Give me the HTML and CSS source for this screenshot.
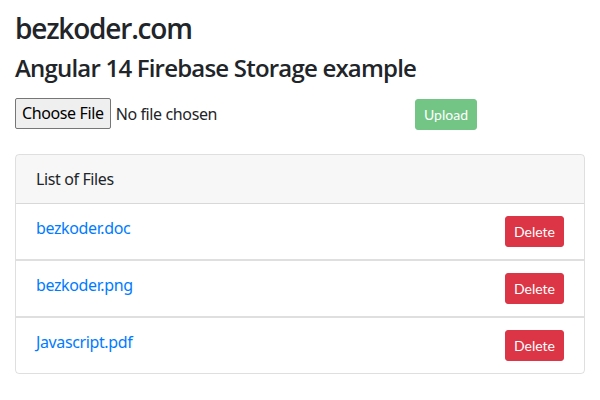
FILE: index.html
```html
<!DOCTYPE html>
<html>
<head>
<meta charset="utf-8">
<link rel="stylesheet" href="styles.css">
</head>
<body>
<div class="container">
  <h3 class="title">bezkoder.com</h3>
  <h4 class="subtitle">Angular 14 Firebase Storage example</h4>
  <div class="row">
    <div class="col-8">
      <label class="file-input">
        <span class="file-btn">Choose File</span>
        <span class="file-name">No file chosen</span>
      </label>
    </div>
    <div class="col-4">
      <button class="btn btn-success" disabled>Upload</button>
    </div>
  </div>
  <div class="card">
    <div class="card-header">List of Files</div>
    <ul class="list-group">
      <li class="list-group-item"><a href="#">bezkoder.doc</a><button class="btn btn-danger">Delete</button></li>
      <li class="list-group-item"><a href="#">bezkoder.png</a><button class="btn btn-danger">Delete</button></li>
      <li class="list-group-item"><a href="#">Javascript.pdf</a><button class="btn btn-danger">Delete</button></li>
    </ul>
  </div>
</div>
</body>
</html>
```
FILE: styles.css
```css
* { box-sizing: border-box; }
body {
  margin: 0;
  font-family: "Noto Sans", "Open Sans", sans-serif;
  font-size: 16px;
  line-height: 1.5;
  color: #212529;
  background: #fff;
  letter-spacing: -0.38px;
}
.container {
  width: 570px;
  margin: 0 15px;
  padding-top: 12px;
}
.title {
  margin: 0 0 8px;
  font-family: "Open Sans", "Noto Sans", sans-serif;
  font-size: 28px;
  font-weight: 600;
  line-height: 1.2;
  letter-spacing: -1.2px;
}
.subtitle {
  margin: 0 0 8px;
  font-family: "Open Sans", "Noto Sans", sans-serif;
  font-size: 24px;
  font-weight: 600;
  line-height: 1.2;
  letter-spacing: -0.8px;
}
.row {
  display: flex;
  margin: 16px -15px 24px;
}
.col-8 { width: 400px; padding: 0 15px; }
.col-4 { width: 200px; padding: 0 15px; }
.file-input {
  display: flex;
  align-items: center;
  font-size: 16px;
}
.file-btn {
  display: inline-block;
  height: 31px;
  line-height: 29px;
  padding: 0 6px;
  border: 1px solid #767676;
  border-radius: 2px;
  background: #efefef;
  color: #000;
}
.file-name { margin-left: 5px; }
.btn {
  display: inline-block;
  font-family: Lato, "Noto Sans", sans-serif;
  font-size: 14px;
  line-height: 1.5;
  letter-spacing: 0;
  padding: 4px 8px;
  border: 1px solid transparent;
  border-radius: 3px;
  color: #fff;
  cursor: pointer;
}
.btn-success {
  background: #28a745;
  border-color: #28a745;
  opacity: .65;
  margin-top: 1px;
}
.btn-danger {
  background: #dc3545;
  border-color: #dc3545;
}
.card {
  border: 1px solid rgba(0,0,0,.125);
  border-radius: 4px;
  overflow: hidden;
}
.card-header {
  padding: 12px 20px;
  background: rgba(0,0,0,.03);
  border-bottom: 1px solid rgba(0,0,0,.125);
}
.list-group {
  list-style: none;
  margin: 0;
  padding: 0;
}
.list-group-item {
  display: flex;
  justify-content: space-between;
  align-items: flex-start;
  padding: 12px 20px;
  border-top: 1px solid rgba(0,0,0,.125);
  border-bottom: 1px solid rgba(0,0,0,.125);
}
.list-group-item:first-child { border-top: 0; }
.list-group-item:last-child { border-bottom: 0; }
.list-group-item a {
  color: #007bff;
  text-decoration: none;
  line-height: 24px;
}
```
